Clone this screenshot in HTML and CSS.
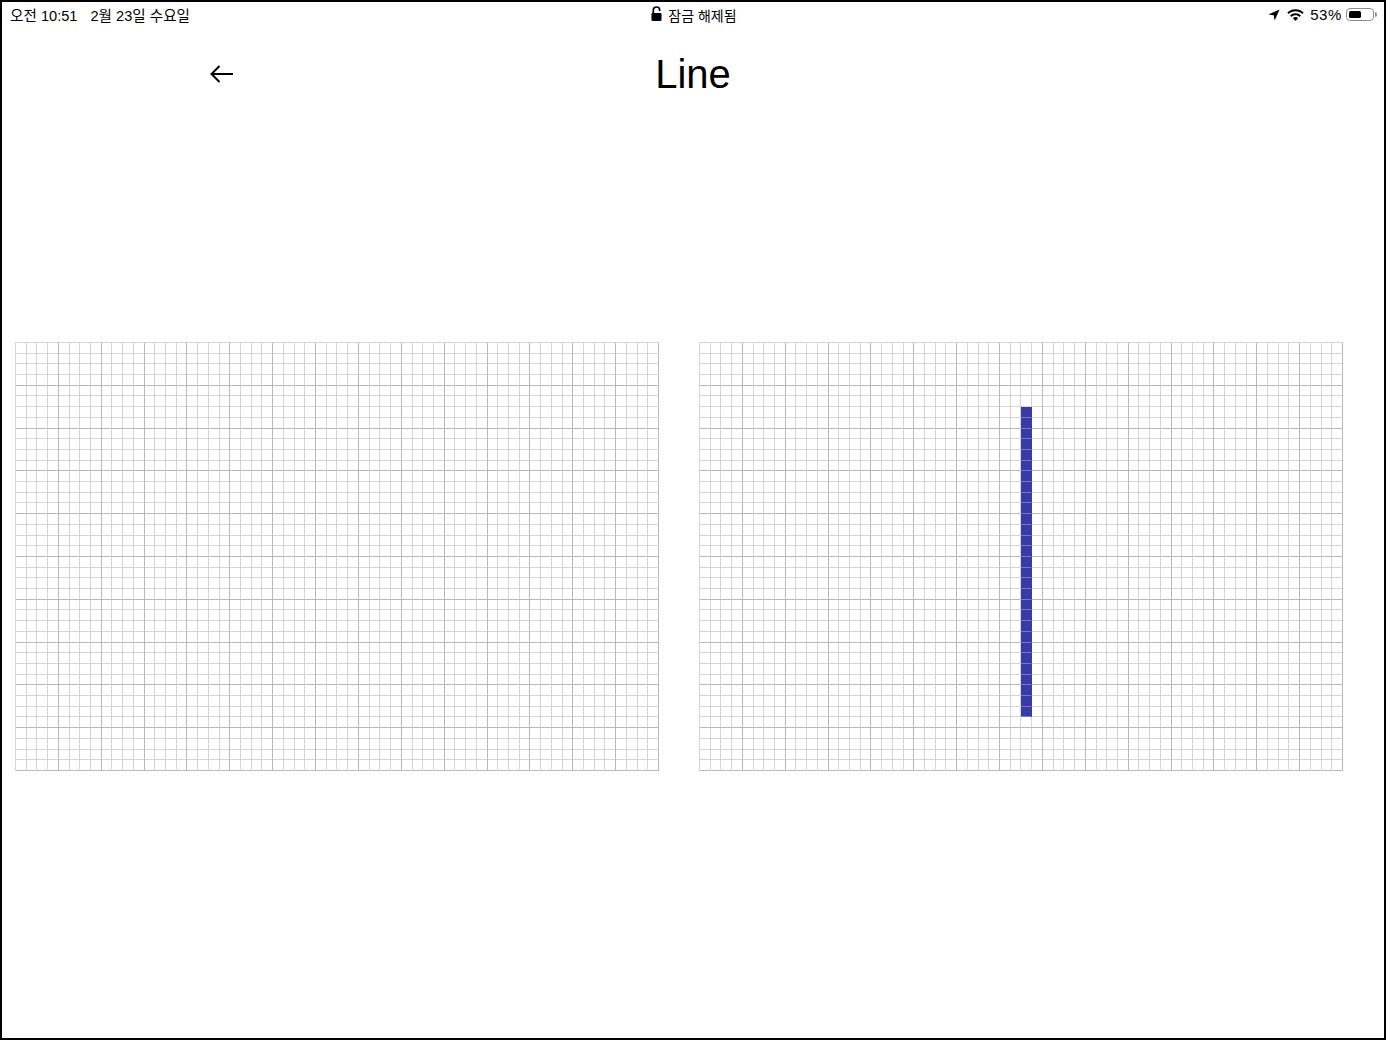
FILE: index.html
```html
<!DOCTYPE html>
<html lang="ko">
  <head>
    <meta charset="UTF-8" />
    <meta name="viewport" content="width=device-width, initial-scale=1.0" />
    <title>Line</title>
    <link rel="stylesheet" href="styles.css">
  </head>
  <body>
    <div class="frame">
      <div class="status">
        <div class="status-left">
          <span class="clock">오전 10:51</span>
          <span>2월 23일 수요일</span>
        </div>
        <div class="status-center">
          <svg class="lock" width="11" height="15" viewBox="0 0 11 15">
            <path d="M2.3 7V4.2a3.2 3.2 0 0 1 6.4 0V5" fill="none" stroke="#000" stroke-width="1.7" />
            <rect x="0.5" y="7" width="10" height="8" rx="1.2" fill="#000" />
          </svg>
          <span>잠금 해제됨</span>
        </div>
        <div class="status-right">
          <svg class="locate" width="12" height="12" viewBox="0 0 12 12">
            <path d="M11.6 0.4L0.4 5.4l5.3 0.9 0.9 5.3z" fill="#000" />
          </svg>
          <svg class="wifi" width="17" height="12" viewBox="0 0 17 12">
            <path d="M8.5 0.3c3.2 0 6.1 1.2 8.2 3.3l-1.4 1.5C13.5 3.3 11.1 2.3 8.5 2.3S3.5 3.3 1.7 5.1L0.3 3.6C2.4 1.5 5.3 0.3 8.5 0.3z" fill="#000" />
            <path d="M8.5 4.2c2.1 0 4 0.8 5.4 2.2l-1.4 1.5C11.4 6.8 10 6.2 8.5 6.2S5.6 6.8 4.5 7.9L3.1 6.4C4.5 5 6.4 4.2 8.5 4.2z" fill="#000" />
            <path d="M8.5 8.1c1 0 1.9 0.4 2.6 1.1L8.5 11.9 5.9 9.2C6.6 8.5 7.5 8.1 8.5 8.1z" fill="#000" />
          </svg>
          <span class="percent">53%</span>
          <div class="battery">
            <div class="battery-level"></div>
          </div>
          <div class="battery-nub"></div>
        </div>
      </div>

      <header class="header">
        <button class="back" type="button">
          <svg width="26" height="20" viewBox="0 0 26 20">
            <path d="M24 10H2.5M10.5 2L2.5 10l8 8" fill="none" stroke="#000" stroke-width="2" />
          </svg>
        </button>
        <h1 class="title">Line</h1>
        <div></div>
      </header>

      <main class="boards">
        <div class="board" id="source"></div>
        <div class="board" id="result"></div>
      </main>
    </div>

    <script>
      const COLS = 60;
      const ROWS = 40;

      function drawBoard(el, isFilled) {
        for (let r = 0; r < ROWS; r++) {
          for (let c = 0; c < COLS; c++) {
            const cell = document.createElement("div");
            cell.className = "cell";
            if (c % 4 === 3) cell.classList.add("edge-x");
            if (r % 4 === 3) cell.classList.add("edge-y");
            if (isFilled(r, c)) cell.classList.add("on");
            el.appendChild(cell);
          }
        }
      }

      drawBoard(document.getElementById("source"), () => false);
      drawBoard(
        document.getElementById("result"),
        (r, c) => c === 30 && r >= 6 && r <= 34
      );
    </script>
  </body>
</html>
```

FILE: styles.css
```css
body {
  margin: 0;
  background: #fff;
  font-family: "Liberation Sans", "Noto Sans CJK KR", sans-serif;
  color: #000;
}
.frame {
  box-sizing: border-box;
  width: 1386px;
  height: 1040px;
  border: 2px solid #000;
}

/* status bar */
.status {
  display: grid;
  grid-template-columns: 1fr auto 1fr;
  align-items: center;
  height: 25px;
  padding: 0 8px;
  font-size: 14px;
}
.status-left {
  display: flex;
  align-items: center;
  font-size: 14.6px;
}
.clock {
  margin-right: 13px;
}
.status-center {
  display: flex;
  align-items: center;
  gap: 6px;
  margin-left: 2px;
}
.lock {
  margin-top: -3px;
}
.status-right {
  display: flex;
  align-items: center;
  justify-content: flex-end;
  margin-right: -1px;
}
.locate {
  margin-right: 7px;
}
.wifi {
  margin-right: 6px;
}
.percent {
  margin-right: 4px;
  font-size: 15px;
  letter-spacing: 0.6px;
}
.battery {
  box-sizing: border-box;
  width: 28px;
  height: 13px;
  padding: 2px;
  border: 1px solid #8e8e8e;
  border-radius: 4px;
}
.battery-level {
  width: 53%;
  height: 100%;
  background: #000;
  border-radius: 1.5px;
}
.battery-nub {
  width: 2px;
  height: 5px;
  margin-left: 1px;
  background: #8e8e8e;
  border-radius: 0 2px 2px 0;
}

/* header */
.header {
  display: grid;
  grid-template-columns: 1fr auto 1fr;
  align-items: center;
  margin-top: 24px;
}
.back {
  justify-self: start;
  display: flex;
  margin-left: 207px;
  padding: 0;
  border: none;
  background: none;
  cursor: pointer;
}
.title {
  margin: 0;
  font-size: 40px;
  font-weight: 400;
  line-height: 46px;
}

/* boards */
.boards {
  display: flex;
  gap: 40px;
  margin-top: 245px;
  padding-left: 13px;
}
.board {
  box-sizing: border-box;
  display: grid;
  grid-template-columns: repeat(60, 1fr);
  grid-template-rows: repeat(40, 1fr);
  width: 644px;
  height: 429px;
  border-left: 1px solid #d4d4d4;
  border-top: 1px solid #d4d4d4;
}
.cell {
  box-sizing: border-box;
  border-right: 1px solid #d4d4d4;
  border-bottom: 1px solid #d4d4d4;
}
.cell.edge-x {
  border-right-color: #b8b8b8;
}
.cell.edge-y {
  border-bottom-color: #b8b8b8;
}
.cell.on {
  background: #3a3aa6;
  border-right-color: #3a3aa6;
  border-bottom-color: #7a7ac6;
}
```
